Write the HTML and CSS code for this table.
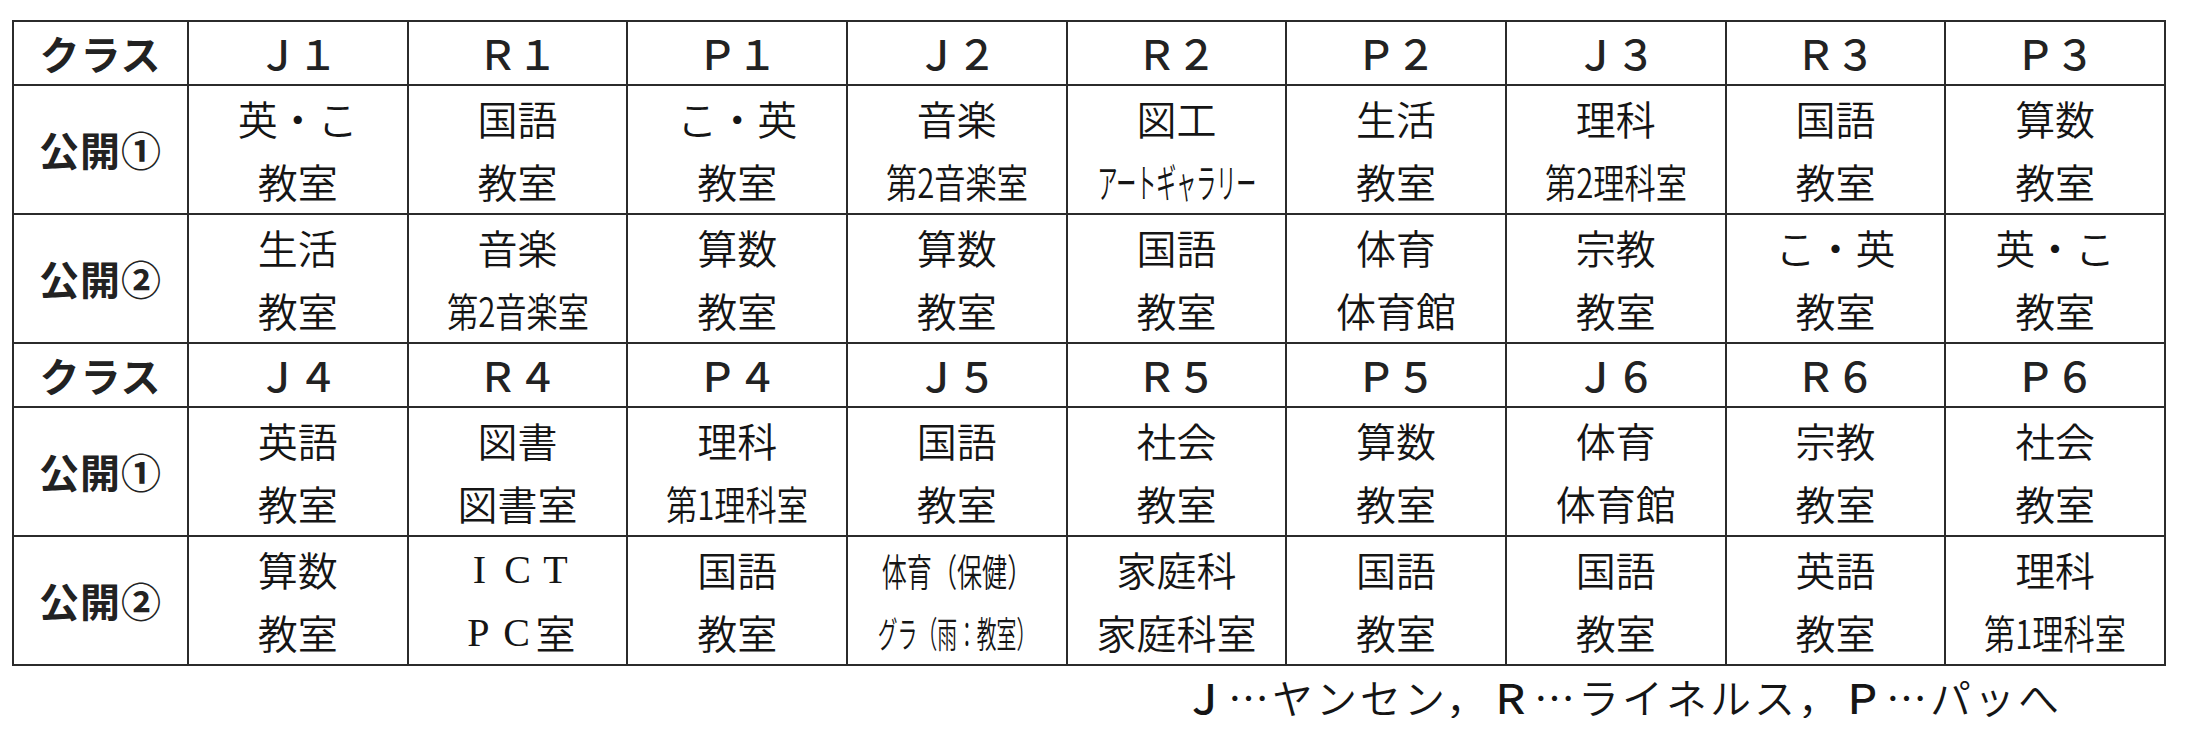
FILE: index.html
```html
<!DOCTYPE html>
<html lang="ja">
<head>
<meta charset="utf-8">
<title>公開授業 教室一覧</title>
<link rel="stylesheet" href="styles.css">
</head>
<body>
<main class="sheet">
  <table class="schedule">
    <colgroup><col class="col-head"><col span="9"></colgroup>
    <tbody>
      <tr class="row-class">
        <th class="label">クラス</th>
        <td>Ｊ１</td><td>Ｒ１</td><td>Ｐ１</td><td>Ｊ２</td><td>Ｒ２</td><td>Ｐ２</td><td>Ｊ３</td><td>Ｒ３</td><td>Ｐ３</td>
      </tr>
      <tr class="row-slot">
        <th class="label">公開①</th>
        <td><div class="ln">英・こ</div><div class="ln">教室</div></td>
        <td><div class="ln">国語</div><div class="ln">教室</div></td>
        <td><div class="ln">こ・英</div><div class="ln">教室</div></td>
        <td><div class="ln">音楽</div><div class="ln"><span class="sq sq-room">第2音楽室</span></div></td>
        <td><div class="ln">図工</div><div class="ln"><span class="sq sq-gallery">アートギャラリー</span></div></td>
        <td><div class="ln">生活</div><div class="ln">教室</div></td>
        <td><div class="ln">理科</div><div class="ln"><span class="sq sq-room">第2理科室</span></div></td>
        <td><div class="ln">国語</div><div class="ln">教室</div></td>
        <td><div class="ln">算数</div><div class="ln">教室</div></td>
      </tr>
      <tr class="row-slot">
        <th class="label">公開②</th>
        <td><div class="ln">生活</div><div class="ln">教室</div></td>
        <td><div class="ln">音楽</div><div class="ln"><span class="sq sq-room">第2音楽室</span></div></td>
        <td><div class="ln">算数</div><div class="ln">教室</div></td>
        <td><div class="ln">算数</div><div class="ln">教室</div></td>
        <td><div class="ln">国語</div><div class="ln">教室</div></td>
        <td><div class="ln">体育</div><div class="ln">体育館</div></td>
        <td><div class="ln">宗教</div><div class="ln">教室</div></td>
        <td><div class="ln">こ・英</div><div class="ln">教室</div></td>
        <td><div class="ln">英・こ</div><div class="ln">教室</div></td>
      </tr>
      <tr class="row-class">
        <th class="label">クラス</th>
        <td>Ｊ４</td><td>Ｒ４</td><td>Ｐ４</td><td>Ｊ５</td><td>Ｒ５</td><td>Ｐ５</td><td>Ｊ６</td><td>Ｒ６</td><td>Ｐ６</td>
      </tr>
      <tr class="row-slot">
        <th class="label">公開①</th>
        <td><div class="ln">英語</div><div class="ln">教室</div></td>
        <td><div class="ln">図書</div><div class="ln">図書室</div></td>
        <td><div class="ln">理科</div><div class="ln"><span class="sq sq-room">第1理科室</span></div></td>
        <td><div class="ln">国語</div><div class="ln">教室</div></td>
        <td><div class="ln">社会</div><div class="ln">教室</div></td>
        <td><div class="ln">算数</div><div class="ln">教室</div></td>
        <td><div class="ln">体育</div><div class="ln">体育館</div></td>
        <td><div class="ln">宗教</div><div class="ln">教室</div></td>
        <td><div class="ln">社会</div><div class="ln">教室</div></td>
      </tr>
      <tr class="row-slot">
        <th class="label">公開②</th>
        <td><div class="ln">算数</div><div class="ln">教室</div></td>
        <td><div class="ln"><span class="latin"><span>I</span><span>C</span><span>T</span></span></div><div class="ln"><span class="latin"><span>P</span><span>C</span></span>室</div></td>
        <td><div class="ln">国語</div><div class="ln">教室</div></td>
        <td><div class="ln"><span class="sq sq-pe">体育（保健）</span></div><div class="ln"><span class="sq sq-ground">グラ（雨：教室）</span></div></td>
        <td><div class="ln">家庭科</div><div class="ln">家庭科室</div></td>
        <td><div class="ln">国語</div><div class="ln">教室</div></td>
        <td><div class="ln">国語</div><div class="ln">教室</div></td>
        <td><div class="ln">英語</div><div class="ln">教室</div></td>
        <td><div class="ln">理科</div><div class="ln"><span class="sq sq-room">第1理科室</span></div></td>
      </tr>
    </tbody>
  </table>
  <p class="legend"><span class="key">Ｊ</span>…ヤンセン，<span class="key">Ｒ</span>…ライネルス，<span class="key">Ｐ</span>…パッへ</p>
</main>
</body>
</html>
```
FILE: styles.css
```css
html, body {
  margin: 0;
  padding: 0;
  background: #ffffff;
}

body {
  font-family: "Noto Sans CJK JP", "Noto Sans", sans-serif;
  color: #151515;
}

.sheet {
  padding: 20px 0 0 12px;
  width: 2154px;
}

.schedule {
  width: 2154px;
  table-layout: fixed;
  border-collapse: collapse;
}

.col-head {
  width: 175px;
}

.schedule th,
.schedule td {
  border: 2px solid #2b2b2b;
  padding: 0;
  text-align: center;
  vertical-align: middle;
  font-size: 40px;
  white-space: nowrap;
}

.row-slot td {
  font-weight: 350;
}

.schedule th.label {
  font-weight: 700;
  color: #222222;
  letter-spacing: 1px;
}

.row-class th,
.row-class td {
  height: 62px;
  line-height: 62px;
}

.row-class td {
  font-weight: 500;
  color: #222222;
}

.row-slot th,
.row-slot td {
  height: 127px;
  line-height: 63px;
}

.ln {
  display: flex;
  justify-content: center;
  align-items: center;
  height: 63px;
  line-height: 63px;
}

.sq {
  display: inline-block;
  flex: none;
  transform-origin: 50% 50%;
}

.sq-room {
  transform: scaleX(0.78);
}

.sq-gallery {
  transform: scaleX(0.5);
}

.sq-pe {
  font-size: 38px;
  transform: scaleX(0.66);
}

.sq-ground {
  font-size: 36px;
  transform: scaleX(0.55);
}

.latin {
  font-family: "Liberation Serif", serif;
  font-weight: 400;
}

.latin span {
  display: inline-block;
  width: 38px;
  text-align: center;
}

.legend {
  margin: 8px 0 0 0;
  padding-left: 1172px;
  font-size: 41px;
  line-height: 44px;
  font-weight: 350;
  letter-spacing: 3px;
  white-space: nowrap;
}

.legend .key {
  font-weight: 500;
}
```
